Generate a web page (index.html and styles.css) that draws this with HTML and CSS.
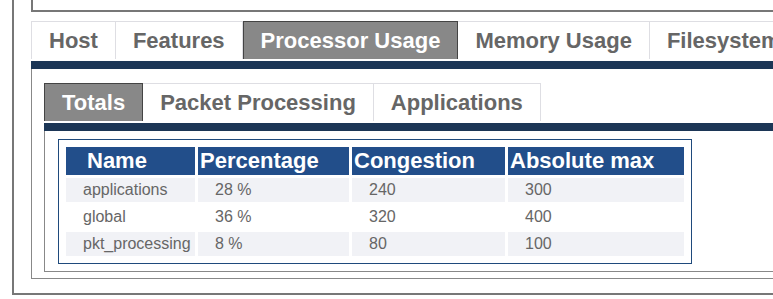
FILE: index.html
```html
<!DOCTYPE html>
<html lang="en">
<head>
    <meta charset="UTF-8">
    <meta name="viewport" content="width=device-width, initial-scale=1.0">
    <title>Processor Usage</title>
    <link rel="stylesheet" href="styles.css">
</head>
<body>
    <div class="frame">
        <div class="top-box"></div>

        <ul class="tabs">
            <li class="tab">Host</li>
            <li class="tab">Features</li>
            <li class="tab active">Processor Usage</li>
            <li class="tab">Memory Usage</li>
            <li class="tab">Filesystem</li>
        </ul>
        <div class="tab-bar"></div>

        <div class="panel">
            <ul class="tabs">
                <li class="tab active">Totals</li>
                <li class="tab">Packet Processing</li>
                <li class="tab">Applications</li>
            </ul>
            <div class="tab-bar"></div>

            <div class="sub-panel">
                <div class="table-box">
                    <table class="usage">
                        <colgroup>
                            <col class="col-name">
                            <col class="col-pct">
                            <col class="col-cong">
                            <col class="col-max">
                        </colgroup>
                        <thead>
                            <tr>
                                <th class="th-name">Name</th>
                                <th>Percentage</th>
                                <th>Congestion</th>
                                <th>Absolute max</th>
                            </tr>
                        </thead>
                        <tbody>
                            <tr class="odd">
                                <td>applications</td>
                                <td>28 %</td>
                                <td>240</td>
                                <td>300</td>
                            </tr>
                            <tr>
                                <td>global</td>
                                <td>36 %</td>
                                <td>320</td>
                                <td>400</td>
                            </tr>
                            <tr class="odd">
                                <td>pkt_processing</td>
                                <td>8 %</td>
                                <td>80</td>
                                <td>100</td>
                            </tr>
                        </tbody>
                    </table>
                </div>
            </div>
        </div>
    </div>
</body>
</html>
```

FILE: styles.css
```css
body {
    margin: 0;
    padding: 0;
    background: #fff;
    overflow: hidden;
    font-family: 'Liberation Sans', Arial, sans-serif;
}

.frame {
    width: 1200px;
    margin-left: 12px;
    padding: 0 0 14px 17px;
    border-left: 2px solid #777;
    border-bottom: 2px solid #777;
}

.top-box {
    height: 10px;
    border: 2px solid #777;
    border-top: none;
}

.tabs {
    display: flex;
    margin: 9px 0 0 0;
    padding: 0;
    list-style: none;
}

.tab {
    height: 37px;
    line-height: 37px;
    padding: 0 17px;
    border: 1px solid #dedee3;
    border-bottom: none;
    border-left: none;
    color: #666;
    font-size: 22px;
    font-weight: bold;
    white-space: nowrap;
}

.tab:first-child {
    border-left: 1px solid #dedee3;
}

.tab.active {
    background: #888;
    color: #fff;
    border: 1px solid #444;
    border-bottom: none;
}

.tab-bar {
    height: 8px;
    margin-top: 2px;
    background: #1c3656;
}

.panel {
    padding: 5px 0 6px 12px;
    border-left: 1px solid #888;
    border-bottom: 1px solid #888;
}

.sub-panel {
    padding: 8px 0 7px 13px;
    border-left: 1px solid #888;
    border-bottom: 1px solid #888;
}

.table-box {
    width: 624px;
    padding: 4px;
    border: 1px solid #1f4a7c;
}

.usage {
    table-layout: fixed;
    width: 624px;
    border-spacing: 3px;
}

.col-name { width: 129px; }
.col-pct { width: 151px; }
.col-cong { width: 153px; }
.col-max { width: 176px; }

.usage th {
    height: 28px;
    padding: 0 0 0 2px;
    background: #224e8a;
    color: #fff;
    font-size: 22px;
    font-weight: bold;
    text-align: left;
    white-space: nowrap;
}

.usage th.th-name {
    padding-left: 21px;
}

.usage td {
    height: 24px;
    padding: 0 0 0 17px;
    color: #666;
    font-size: 16px;
    white-space: nowrap;
}

.usage tr.odd td {
    background: #f1f2f6;
}
```
